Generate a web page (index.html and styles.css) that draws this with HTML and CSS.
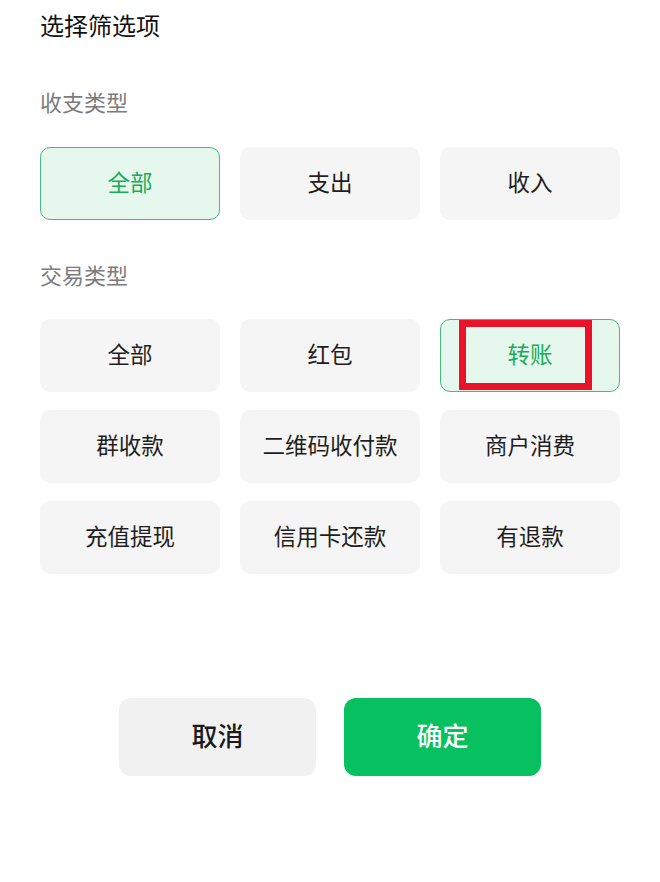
FILE: index.html
```html
<!DOCTYPE html>
<html lang="zh">
<head>
<meta charset="utf-8">
<link rel="stylesheet" href="styles.css">
</head>
<body>
<div class="page">
  <div class="title">选择筛选项</div>
  <div class="label first">收支类型</div>
  <div class="grid">
    <div class="opt sel">全部</div>
    <div class="opt">支出</div>
    <div class="opt">收入</div>
  </div>
  <div class="label second">交易类型</div>
  <div class="grid">
    <div class="opt">全部</div>
    <div class="opt">红包</div>
    <div class="opt sel">转账<span class="mark"></span></div>
    <div class="opt">群收款</div>
    <div class="opt">二维码收付款</div>
    <div class="opt">商户消费</div>
    <div class="opt">充值提现</div>
    <div class="opt">信用卡还款</div>
    <div class="opt">有退款</div>
  </div>
  <div class="actions">
    <div class="btn cancel">取消</div>
    <div class="btn ok">确定</div>
  </div>
</div>
</body>
</html>
```
FILE: styles.css
```css
html, body {
  margin: 0;
  padding: 0;
  background: #ffffff;
}
body {
  font-family: "Noto Sans CJK SC", "Noto Sans", sans-serif;
  color: #1b1b1b;
}
.page {
  width: 580px;
  padding: 0 40px;
}
.title {
  height: 52px;
  line-height: 50px;
  font-size: 24px;
  color: #111;
}
.label {
  height: 40px;
  line-height: 36px;
  font-size: 22px;
  color: #7b7b7b;
}
.label.first {
  margin-top: 31px;
  margin-bottom: 24px;
}
.label.second {
  margin-top: 36px;
  margin-bottom: 23px;
}
.grid {
  display: grid;
  grid-template-columns: repeat(3, 180px);
  column-gap: 20px;
  row-gap: 18px;
}
.opt {
  position: relative;
  box-sizing: border-box;
  height: 73px;
  padding-bottom: 5px;
  border-radius: 10px;
  background: #f5f5f5;
  display: flex;
  align-items: center;
  justify-content: center;
  font-size: 22.5px;
  color: #1e1e1e;
}
.opt.sel {
  background: #e6f7ed;
  border: 1.5px solid #4bb77c;
  color: #17ad58;
}
.mark {
  position: absolute;
  left: 18px;
  top: 0px;
  width: 133px;
  height: 70px;
  box-sizing: border-box;
  border: 7px solid #ea1228;
}
.actions {
  display: flex;
  justify-content: center;
  gap: 28px;
  margin-top: 124px;
}
.btn {
  width: 197px;
  height: 78px;
  box-sizing: border-box;
  padding-bottom: 5px;
  border-radius: 12px;
  display: flex;
  align-items: center;
  justify-content: center;
  font-size: 26px;
  font-weight: 500;
}
.btn.cancel {
  background: #f1f1f1;
  color: #1a1a1a;
}
.btn.ok {
  background: #07c160;
  color: #ffffff;
}
```
